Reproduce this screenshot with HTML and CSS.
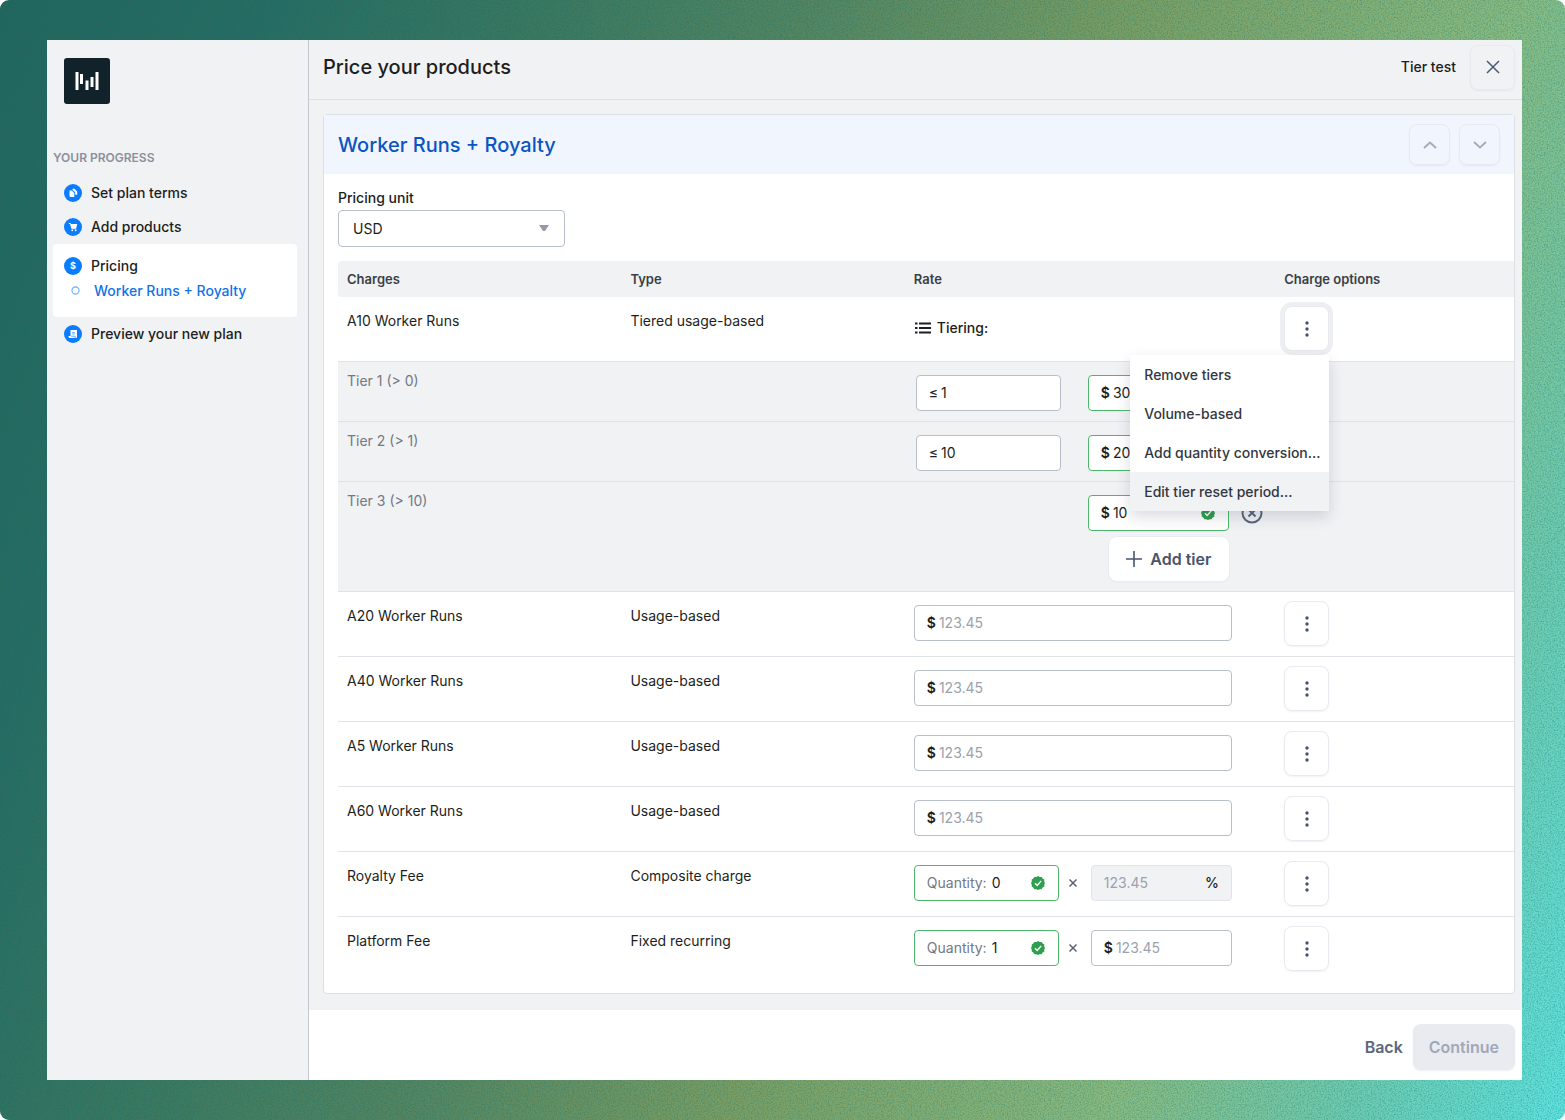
FILE: index.html
```html
<!DOCTYPE html>
<html lang="en">
<head>
<meta charset="UTF-8">
<meta name="viewport" content="width=device-width, initial-scale=1.0">
<title>Price your products</title>
<link rel="stylesheet" href="styles.css">
</head>
<body>

<!-- shared icons -->
<svg class="sprite" aria-hidden="true">
  <symbol id="dots" viewBox="0 0 18 18">
    <circle cx="9" cy="3" r="1.700"/><circle cx="9" cy="9" r="1.700"/><circle cx="9" cy="15" r="1.700"/>
  </symbol>
  <symbol id="check" viewBox="0 0 14 14">
    <path d="M7 0l1.700 1 2-.1.900 1.700 1.700 1L13.200 5.600 14 7l-.8 1.700.1 2-1.700.9-1 1.700-1.900-.1L7 14l-1.700-.8-2 .1-.9-1.700-1.700-1 .1-1.900L0 7l.8-1.400-.1-2 1.700-1 .9-1.700 2 .1z" fill="#2f9e4f"/>
    <path d="M4 7.300l2.200 2.200 4-4.600" fill="none" stroke="#fff" stroke-width="1.400"/>
  </symbol>
  <symbol id="times" viewBox="0 0 10 10">
    <path d="M1.500 1.500l7 7M8.500 1.500l-7 7" fill="none" stroke="currentColor" stroke-width="1.500"/>
  </symbol>
</svg>

<div class="backdrop">
  <svg class="grain" aria-hidden="true">
    <filter id="noise">
      <feTurbulence type="fractalNoise" baseFrequency="0.7" numOctaves="2" seed="4"/>
      <feColorMatrix type="matrix" values="0 0 0 0 0  0 0 0 0 0.15  0 0 0 0 0.15  0.8 0 0 0 -0.32"/>
    </filter>
    <rect width="100%" height="100%" filter="url(#noise)"/>
  </svg>

  <div class="app">
    <aside class="sidebar">
      <svg class="logo" viewBox="0 0 46 46" role="img" aria-label="Logo">
        <rect width="46" height="46" rx="3" fill="#11222a"/>
        <path d="M13 14v18M17.500 16v10M23 22.500V32M28 19v10M33 14v18" stroke="#fff" stroke-width="3"/>
      </svg>
      <h2 class="progress-title">YOUR PROGRESS</h2>
      <nav class="steps">
        <a class="step" href="#terms">
          <svg class="step-icon" viewBox="0 0 18 18">
            <circle cx="9" cy="9" r="9"/>
            <path d="M8.500 4.800h2l2.700 2.700v3.200h-2V8.300L8.500 6z" fill="#fff"/>
            <path d="M5.500 6.500h2.300L10.300 9v4H6.500a1 1 0 0 1-1-1z" fill="#fff"/>
          </svg>
          Set plan terms
        </a>
        <a class="step" href="#products">
          <svg class="step-icon" viewBox="0 0 18 18">
            <circle cx="9" cy="9" r="9"/>
            <path d="M4.800 5.500h1.700l1.300 5.200h4.400" fill="none" stroke="#fff"/>
            <path d="M6.500 6h6.700l-.9 4H7.500z" fill="#fff"/>
            <circle cx="8.200" cy="12.300" r=".9" fill="#fff"/><circle cx="11.700" cy="12.300" r=".9" fill="#fff"/>
          </svg>
          Add products
        </a>
        <div class="step-group">
          <a class="step" href="#pricing">
            <span class="step-icon dollar" aria-hidden="true">$</span>
            Pricing
          </a>
          <a class="substep" href="#worker-runs">
            <svg class="ring" viewBox="0 0 9 9"><circle cx="4.500" cy="4.500" r="3.500" fill="none" stroke="#7db8f8" stroke-width="1.300"/></svg>
            Worker Runs + Royalty
          </a>
        </div>
        <a class="step" href="#preview">
          <svg class="step-icon" viewBox="0 0 18 18">
            <circle cx="9" cy="9" r="9"/>
            <path d="M6.500 5H13v7a1 1 0 0 1-1 1H6a1.500 1.500 0 0 1-1.500-1.500V11h2z" fill="#fff"/>
            <path d="M8.200 7.500h2.600M8.200 9h2.600M7 11.200h4.200V13" fill="none" stroke="#0a7cff" stroke-width=".6"/>
          </svg>
          Preview your new plan
        </a>
      </nav>
    </aside>

    <main class="main">
      <header class="topbar">
        <h1>Price your products</h1>
        <span class="plan-name">Tier test</span>
        <button class="icon-btn" type="button" aria-label="Close">
          <svg width="14" height="14" viewBox="0 0 14 14"><path d="M1 1l12 12M13 1L1 13" stroke="#4b5872" stroke-width="1.500"/></svg>
        </button>
      </header>

      <section class="card">
        <div class="card-head">
          <h2>Worker Runs + Royalty</h2>
          <button class="icon-btn small" type="button" aria-label="Move up">
            <svg width="14" height="8" viewBox="0 0 14 8"><path d="M1 7l6-5.500L13 7" fill="none" stroke="#a5acbb" stroke-width="2"/></svg>
          </button>
          <button class="icon-btn small" type="button" aria-label="Move down">
            <svg width="14" height="8" viewBox="0 0 14 8"><path d="M1 1l6 5.500L13 1" fill="none" stroke="#a5acbb" stroke-width="2"/></svg>
          </button>
        </div>

        <div class="card-body">
          <label class="unit-label" for="unit">Pricing unit</label>
          <div class="select-wrap">
            <select id="unit">
              <option>USD</option>
            </select>
            <svg class="caret" viewBox="0 0 10 6"><path d="M0 0h10L6 6H4z" fill="#959ca8"/></svg>
          </div>

          <table class="charges">
            <thead>
              <tr>
                <th class="col-name">Charges</th>
                <th class="col-type">Type</th>
                <th class="col-rate">Rate</th>
                <th>Charge options</th>
              </tr>
            </thead>
            <tbody>
              <tr>
                <td>A10 Worker Runs</td>
                <td>Tiered usage-based</td>
                <td class="rate">
                  <div class="tiering">
                    <svg width="16" height="12" viewBox="0 0 16 12"><path d="M4 1.500h12M4 6h12M4 10.500h12M0 1.500h2.500M0 6h2.500M0 10.500h2.500" stroke="#1c1e21" stroke-width="2"/></svg>
                    Tiering:
                  </div>
                </td>
                <td class="options">
                  <div class="menu-anchor">
                    <button class="icon-btn open" type="button" aria-label="Charge options" aria-expanded="true"><svg class="dots"><use href="#dots"/></svg></button>
                    <div class="menu">
                      <button type="button">Remove tiers</button>
                      <button type="button">Volume-based</button>
                      <button type="button">Add quantity conversion...</button>
                      <button class="hover" type="button">Edit tier reset period...</button>
                    </div>
                  </div>
                </td>
              </tr>
              <tr class="tier">
                <td colspan="2">Tier 1 (&gt; 0)</td>
                <td colspan="2">
                  <div class="tier-inputs">
                    <label class="field quantity">≤ <input type="text" value="1" aria-label="Tier 1 limit"></label>
                    <label class="field price valid"><b>$</b> <input type="text" value="30" aria-label="Tier 1 price"><svg class="check"><use href="#check"/></svg></label>
                  </div>
                </td>
              </tr>
              <tr class="tier">
                <td colspan="2">Tier 2 (&gt; 1)</td>
                <td colspan="2">
                  <div class="tier-inputs">
                    <label class="field quantity">≤ <input type="text" value="10" aria-label="Tier 2 limit"></label>
                    <label class="field price valid"><b>$</b> <input type="text" value="20" aria-label="Tier 2 price"><svg class="check"><use href="#check"/></svg></label>
                  </div>
                </td>
              </tr>
              <tr class="tier">
                <td colspan="2">Tier 3 (&gt; 10)</td>
                <td colspan="2">
                  <div class="tier-inputs last">
                    <label class="field price valid"><b>$</b> <input type="text" value="10" aria-label="Tier 3 price"><svg class="check"><use href="#check"/></svg></label>
                    <button class="remove" type="button" aria-label="Remove tier 3">
                      <svg width="22" height="22" viewBox="0 0 22 22"><circle cx="11" cy="11" r="9.500"/><path d="M7.500 7.500l7 7M14.500 7.500l-7 7"/></svg>
                    </button>
                    <button class="add-tier" type="button">
                      <svg width="16" height="16" viewBox="0 0 16 16"><path d="M8 0v16M0 8h16" stroke="#47546b" stroke-width="1.600"/></svg>
                      Add tier
                    </button>
                  </div>
                </td>
              </tr>
              <tr>
                <td>A20 Worker Runs</td>
                <td>Usage-based</td>
                <td class="rate"><label class="field"><b>$</b> <input type="text" placeholder="123.45" aria-label="A20 Worker Runs rate"></label></td>
                <td class="options"><button class="icon-btn" type="button" aria-label="Charge options"><svg class="dots"><use href="#dots"/></svg></button></td>
              </tr>
              <tr>
                <td>A40 Worker Runs</td>
                <td>Usage-based</td>
                <td class="rate"><label class="field"><b>$</b> <input type="text" placeholder="123.45" aria-label="A40 Worker Runs rate"></label></td>
                <td class="options"><button class="icon-btn" type="button" aria-label="Charge options"><svg class="dots"><use href="#dots"/></svg></button></td>
              </tr>
              <tr>
                <td>A5 Worker Runs</td>
                <td>Usage-based</td>
                <td class="rate"><label class="field"><b>$</b> <input type="text" placeholder="123.45" aria-label="A5 Worker Runs rate"></label></td>
                <td class="options"><button class="icon-btn" type="button" aria-label="Charge options"><svg class="dots"><use href="#dots"/></svg></button></td>
              </tr>
              <tr>
                <td>A60 Worker Runs</td>
                <td>Usage-based</td>
                <td class="rate"><label class="field"><b>$</b> <input type="text" placeholder="123.45" aria-label="A60 Worker Runs rate"></label></td>
                <td class="options"><button class="icon-btn" type="button" aria-label="Charge options"><svg class="dots"><use href="#dots"/></svg></button></td>
              </tr>
              <tr>
                <td>Royalty Fee</td>
                <td>Composite charge</td>
                <td class="rate">
                  <div class="composite">
                    <label class="field quantity valid"><span class="hint">Quantity:</span> <input type="text" value="0"><svg class="check"><use href="#check"/></svg></label>
                    <svg class="times"><use href="#times"/></svg>
                    <label class="field price disabled"><input type="text" placeholder="123.45" disabled> %</label>
                  </div>
                </td>
                <td class="options"><button class="icon-btn" type="button" aria-label="Charge options"><svg class="dots"><use href="#dots"/></svg></button></td>
              </tr>
              <tr>
                <td>Platform Fee</td>
                <td>Fixed recurring</td>
                <td class="rate">
                  <div class="composite">
                    <label class="field quantity valid"><span class="hint">Quantity:</span> <input type="text" value="1"><svg class="check"><use href="#check"/></svg></label>
                    <svg class="times"><use href="#times"/></svg>
                    <label class="field price"><b>$</b> <input type="text" placeholder="123.45"></label>
                  </div>
                </td>
                <td class="options"><button class="icon-btn" type="button" aria-label="Charge options"><svg class="dots"><use href="#dots"/></svg></button></td>
              </tr>
            </tbody>
          </table>
        </div>
      </section>

      <footer class="footer">
        <button class="back" type="button">Back</button>
        <button class="continue" type="button" disabled>Continue</button>
      </footer>
    </main>
  </div>
</div>

</body>
</html>
```

FILE: styles.css
```css
* {
  box-sizing: border-box;
}
body {
  margin: 0;
  background: #fff;
  color: #1c1e21;
  font-family: Inter, "Liberation Sans", sans-serif;
  font-size: 14px;
  line-height: 20px;
}
h1, h2 {
  margin: 0;
  font-weight: 500;
}
button, input, select {
  font: inherit;
  color: inherit;
}
button {
  padding: 0;
  border: none;
  background: none;
  cursor: pointer;
}
a {
  color: inherit;
  text-decoration: none;
}
svg {
  flex: none;
}
.sprite {
  position: absolute;
  width: 0;
  height: 0;
}

/* backdrop */
.backdrop {
  position: relative;
  display: flex;
  min-height: 100vh;
  padding: 40px 43px 40px 47px;
  border-radius: 9px;
  overflow: hidden;
  background: linear-gradient(110deg, #24655c 0%, #296c62 14%, #3d785f 28%, #578661 42%, #7b9d63 57%, #8aba80 77%, #6fcbb0 89%, #60e2df 100%);
}
.grain {
  position: absolute;
  top: 0;
  left: 0;
  width: 100%;
  height: 100%;
}
.app {
  position: relative;
  display: flex;
  flex: 1;
  background: #f1f2f4;
}

/* sidebar */
.sidebar {
  width: 262px;
  flex: none;
  padding: 18px 11px 18px 6px;
  border-right: 1px solid #c3c8d2;
}
.logo {
  display: block;
  width: 46px;
  height: 46px;
  margin-left: 11px;
}
.progress-title {
  margin: 44px 0 8px;
  color: #8a909c;
  font-size: 12px;
  font-weight: 600;
}
.step {
  display: flex;
  align-items: center;
  gap: 9px;
  height: 34px;
  padding-left: 11px;
  font-weight: 500;
}
.step-icon {
  width: 18px;
  height: 18px;
  flex: none;
  fill: #0a7cff;
}
.dollar {
  border-radius: 50%;
  background: #0a7cff;
  color: #fff;
  font-size: 9px;
  font-weight: 700;
  line-height: 18px;
  text-align: center;
}
.step-group {
  padding: 9px 0 14px;
  border-radius: 4px;
  background: #fff;
}
.step-group .step {
  height: 25px;
}
.substep {
  display: flex;
  align-items: center;
  gap: 14px;
  height: 25px;
  padding-left: 18px;
  color: #1273e6;
  font-weight: 500;
}
.ring {
  width: 9px;
  height: 9px;
}

/* main column */
.main {
  display: flex;
  flex: 1;
  flex-direction: column;
  min-width: 0;
}
.topbar {
  display: flex;
  align-items: center;
  gap: 14px;
  height: 60px;
  padding: 0 7px 5px 14px;
  border-bottom: 1px solid #dcdfe4;
}
.topbar h1 {
  flex: 1;
  font-size: 20px;
}
.plan-name {
  font-weight: 500;
}
.icon-btn {
  display: flex;
  align-items: center;
  justify-content: center;
  width: 45px;
  height: 45px;
  border: 1px solid #e9eaef;
  border-radius: 8px;
  box-shadow: 0 1px 2px rgba(30, 40, 70, 0.06);
}
.icon-btn.small {
  width: 41px;
  height: 41px;
}
.icon-btn.open {
  background: #fff;
  box-shadow: 0 0 0 4px #eeeff2;
}
.dots {
  width: 18px;
  height: 18px;
  fill: #47546b;
}

.card {
  margin: 14px 7px 16px 14px;
  border: 1px solid #dcdfe4;
  border-radius: 4px;
  background: #fff;
}
.card-head {
  display: flex;
  align-items: center;
  gap: 9px;
  height: 59px;
  padding: 0 14px;
  background: #f0f5fe;
}
.card-head h2 {
  flex: 1;
  color: #0b55c0;
  font-size: 20px;
}
.card-body {
  padding: 14px 0 12px 14px;
}
.unit-label {
  display: block;
  margin-bottom: 2px;
  font-weight: 500;
}
.select-wrap {
  position: relative;
  width: 227px;
  margin-bottom: 14px;
}
.select-wrap select {
  display: block;
  width: 100%;
  height: 37px;
  padding: 0 14px;
  border: 1px solid #b9bfca;
  border-radius: 4px;
  background: #fff;
  appearance: none;
}
.caret {
  position: absolute;
  top: 15px;
  right: 16px;
  width: 10px;
  height: 6px;
}

/* charges table */
.charges {
  width: 100%;
  border-collapse: separate;
  border-spacing: 0;
  table-layout: fixed;
}
.charges th {
  height: 36px;
  padding: 0 9px;
  background: #f1f2f4;
  color: #3a3e46;
  font-size: 13px;
  font-weight: 600;
  text-align: left;
}
.charges th:first-child {
  border-radius: 4px 0 0 4px;
}
.col-name, .col-type {
  width: 24.1%;
}
.col-rate {
  width: 31.5%;
}
.charges td {
  padding: 14px 9px 0;
  border-bottom: 1px solid #e0e2e8;
  vertical-align: top;
}
.charges .rate {
  padding-top: 13px;
}
.charges .options {
  padding: 9px 9px 10px;
}
.charges tr:last-child td {
  border-bottom: none;
}
.charges .tier td {
  padding: 9px 9px 0;
  background: #f1f2f4;
  color: #727985;
}
.charges .tier td:last-child {
  padding: 13px 9px 10px 11px;
}
.tiering {
  display: flex;
  align-items: center;
  gap: 6px;
  height: 36px;
  padding-left: 1px;
  font-weight: 500;
}

/* inputs */
.field {
  display: flex;
  align-items: center;
  gap: 3px;
  width: 318px;
  height: 36px;
  padding: 0 12px;
  border: 1px solid #b9bfca;
  border-radius: 4px;
  background: #fff;
  color: #1c1e21;
}
.field b {
  font-weight: 600;
}
.field input {
  flex: 1;
  width: 0;
  min-width: 0;
  padding: 0;
  border: none;
  outline: none;
  background: none;
}
.field input::placeholder {
  color: #9ba1ad;
}
.field.quantity {
  width: 145px;
}
.field.price {
  width: 141px;
}
.field.valid {
  border-color: #4db86b;
}
.field.disabled {
  border-color: #e2e4e9;
  background: #f1f2f4;
  font-weight: 500;
}
.field.disabled input {
  font-weight: 400;
}
.hint {
  color: #727985;
}
.hint + input {
  margin-left: 2px;
}
.check {
  width: 14px;
  height: 14px;
  margin-right: 1px;
}
.composite {
  display: flex;
  align-items: center;
  gap: 9px;
}
.times {
  width: 10px;
  height: 10px;
  margin-right: 4px;
  color: #5b6372;
}
.tier-inputs {
  display: grid;
  grid-template-columns: 145px 141px 22px;
  column-gap: 27px;
}
.tier-inputs.last {
  row-gap: 6px;
}
.last .price {
  grid-column: 2;
}
.remove {
  display: flex;
  align-items: center;
  margin-left: -15px;
}
.remove svg {
  fill: none;
  stroke: #5b667c;
  stroke-width: 2px;
}
.add-tier {
  display: flex;
  grid-column: 2;
  align-items: center;
  justify-content: center;
  justify-self: end;
  gap: 8px;
  width: 120px;
  height: 44px;
  border-radius: 8px;
  background: #fff;
  box-shadow: 0 0 0 1px #ebecf0, 0 1px 2px rgba(30, 40, 70, 0.08);
  color: #47546b;
  font-size: 16px;
  font-weight: 600;
}

/* dropdown menu */
.menu-anchor {
  position: relative;
  width: 45px;
}
.menu {
  position: absolute;
  top: 49px;
  right: 0;
  z-index: 2;
  width: 199px;
  background: #fff;
  box-shadow: 0 6px 14px rgba(30, 40, 60, 0.16);
}
.menu button {
  display: block;
  width: 100%;
  height: 39px;
  padding: 0 14px;
  color: #33373e;
  font-weight: 500;
  text-align: left;
  white-space: nowrap;
}
.menu .hover {
  background: #f1f2f4;
}

/* footer */
.footer {
  display: flex;
  flex: 1;
  align-items: flex-start;
  justify-content: flex-end;
  gap: 10px;
  padding: 14px 7px 10px;
  background: #fff;
}
.footer button {
  height: 46px;
  font-size: 16px;
  font-weight: 600;
}
.back {
  color: #5b667c;
}
.continue {
  padding: 0 16px;
  border-radius: 8px;
  background: #e9ebf0;
  box-shadow: 0 1px 2px rgba(30, 40, 70, 0.08);
}
.footer .continue {
  color: #a0a8b8;
}
```
